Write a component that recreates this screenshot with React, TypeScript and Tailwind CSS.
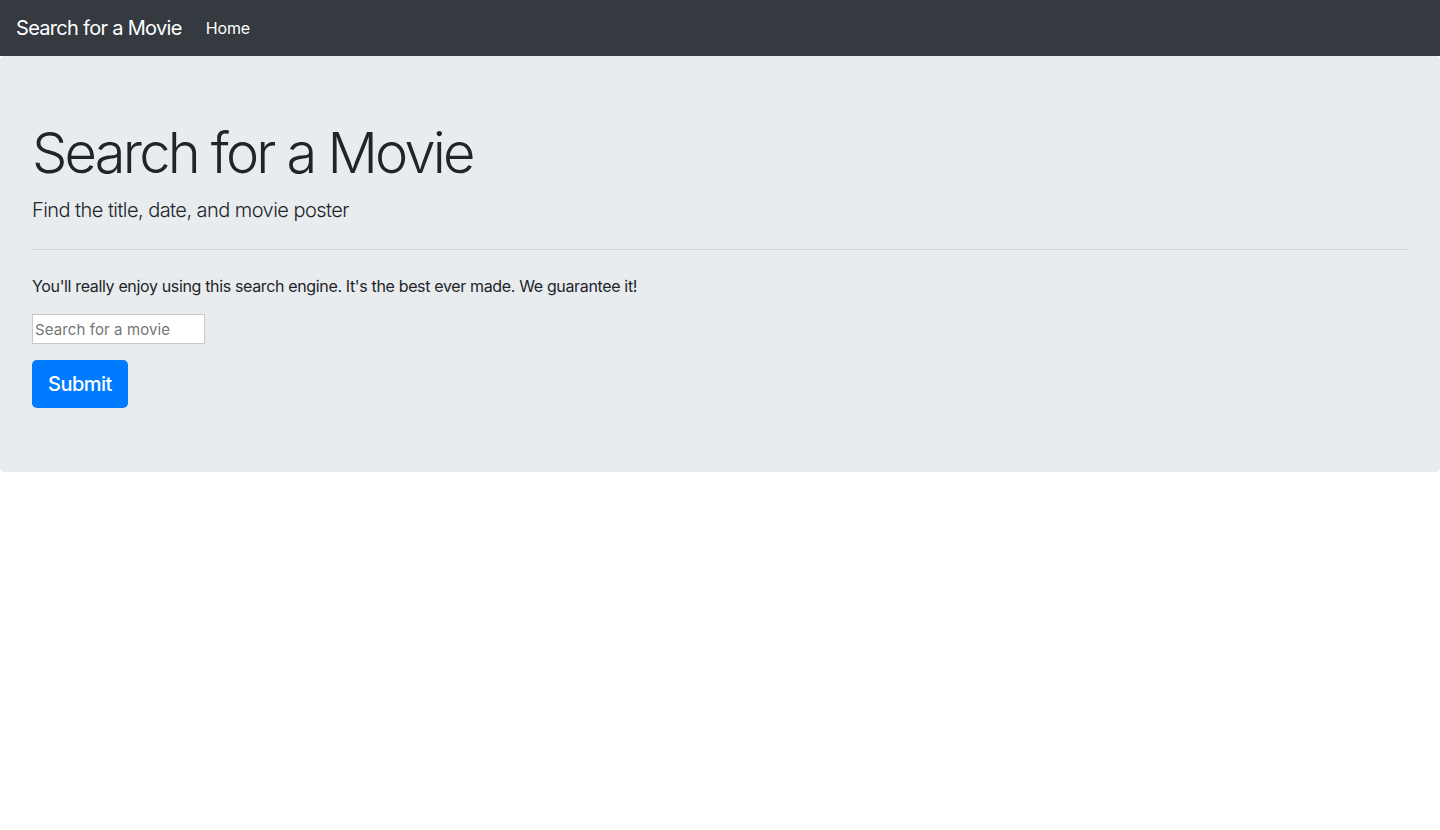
import React from "react";

const App = () => {
  return (
    <div className="min-h-screen bg-white text-[#212529] font-['Inter','Helvetica_Neue',Arial,sans-serif]">
      {/* Navbar */}
      <nav className="flex items-center h-14 px-4 bg-[#343a40]">
        <a href="#" className="text-white text-[20px] leading-[30px] mr-4 tracking-[-0.7px]">
          Search for a Movie
        </a>
        <a href="#" className="text-white text-base leading-6 px-2 tracking-[-0.1px]">
          Home
        </a>
      </nav>

      {/* Jumbotron */}
      <div className="bg-[#e9ecef] rounded-[0.3rem] px-8 py-16 mb-8">
        <h1 className="text-[56px] leading-[1.2] font-light mb-2 tracking-[-2.8px]">
          Search for a Movie
        </h1>
        <p className="text-[20px] leading-[30px] font-light tracking-[-0.55px]">
          Find the title, date, and movie poster
        </p>
        <hr className="my-6 border-0 border-t border-black/10" />
        <p className="text-base leading-6 mb-4 tracking-[-0.35px]">
          You'll really enjoy using this search engine. It's the best ever made. We guarantee it!
        </p>
        <form className="flex flex-col items-start gap-4" onSubmit={(e) => e.preventDefault()}>
          <input
            type="text"
            placeholder="Search for a movie"
            className="w-[173px] h-[30px] bg-white border border-[#c8c8c8] px-[2px] text-[15px] tracking-[0.1px] placeholder:text-[#757575] outline-none"
          />
          <button
            type="submit"
            className="bg-[#007bff] text-white text-[20px] leading-[30px] font-medium tracking-[-0.5px] px-4 py-[9px] rounded-[0.3rem]"
          >
            Submit
          </button>
        </form>
      </div>
    </div>
  );
};

export default App;
